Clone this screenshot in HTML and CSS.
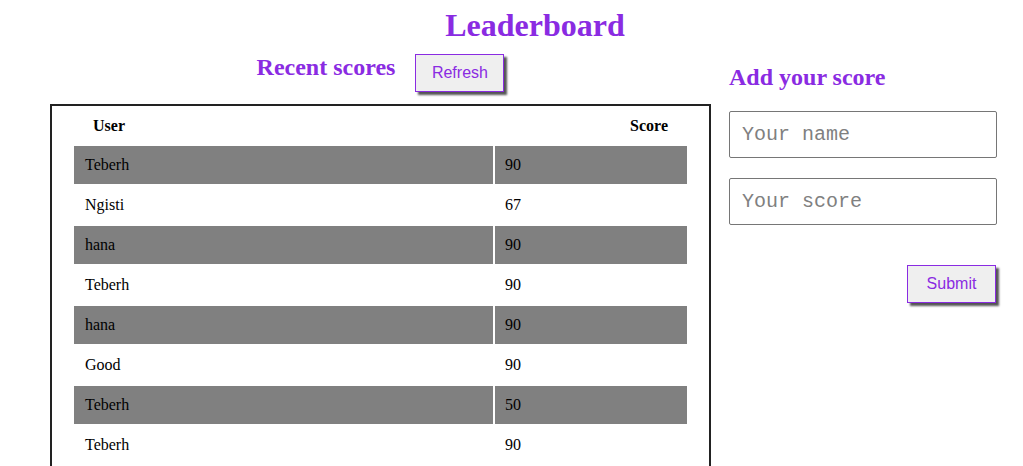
FILE: index.html
```html
<!DOCTYPE html>
<html lang="en">
<head>
<meta charset="utf-8">
<title>Leaderboard</title>
<link rel="stylesheet" href="styles.css">
</head>
<body>
<h1 class="title">Leaderboard</h1>
<main class="layout">
  <section class="recent">
    <div class="recent-head">
      <h2 class="heading">Recent scores</h2>
      <button class="btn" type="button">Refresh</button>
    </div>
    <div class="board">
      <table class="scores">
        <thead>
          <tr><th class="col-user">User</th><th class="col-score">Score</th></tr>
        </thead>
        <tbody>
          <tr class="shade"><td class="c-user">Teberh</td><td>90</td></tr>
          <tr><td class="c-user">Ngisti</td><td>67</td></tr>
          <tr class="shade"><td class="c-user">hana</td><td>90</td></tr>
          <tr><td class="c-user">Teberh</td><td>90</td></tr>
          <tr class="shade"><td class="c-user">hana</td><td>90</td></tr>
          <tr><td class="c-user">Good</td><td>90</td></tr>
          <tr class="shade"><td class="c-user">Teberh</td><td>50</td></tr>
          <tr><td class="c-user">Teberh</td><td>90</td></tr>
        </tbody>
      </table>
    </div>
  </section>
  <section class="add">
    <h2 class="heading">Add your score</h2>
    <form class="form">
      <input class="field" type="text" placeholder="Your name">
      <input class="field" type="text" placeholder="Your score">
      <div class="actions">
        <button class="btn" type="button">Submit</button>
      </div>
    </form>
  </section>
</main>
</body>
</html>
```
FILE: styles.css
```css
* { box-sizing: border-box; }

body {
  margin: 0;
  font-family: "Liberation Serif", "Times New Roman", serif;
  color: #000;
  background: #fff;
}

.title {
  margin: 8px 0 0;
  padding-left: 47px;
  text-align: center;
  font-size: 32px;
  line-height: 35px;
  font-weight: bold;
  color: #8a2be2;
}

.layout {
  display: flex;
  align-items: flex-start;
  padding: 0 26px 0 50px;
  gap: 18px;
}

.recent {
  width: 661px;
  margin-top: 11px;
}

.recent-head {
  display: flex;
  justify-content: center;
  align-items: flex-start;
  gap: 20px;
  margin-bottom: 12px;
}

.heading {
  margin: 0;
  font-size: 24px;
  line-height: 27px;
  font-weight: bold;
  color: #8a2be2;
}

.btn {
  width: 89px;
  height: 38px;
  padding: 0;
  background: #efefef;
  border: 1px solid #8a2be2;
  box-shadow: 3px 3px 2px #555;
  color: #8a2be2;
  font-family: "Liberation Sans", Arial, sans-serif;
  font-size: 16px;
  cursor: pointer;
}

.board {
  border: 2px solid #222;
  padding: 0 20px;
  height: 400px;
}

.scores {
  width: 100%;
  border-collapse: separate;
  border-spacing: 2px;
  font-size: 16px;
  line-height: 18px;
}

.scores th {
  padding: 9px 19px;
  font-weight: bold;
}

.col-user {
  width: 419px;
  text-align: left;
}

.col-score {
  text-align: right;
}

.scores td {
  padding: 10px 10px;
  text-align: left;
}

.scores td.c-user {
  padding-left: 11px;
}

.shade td {
  background: #808080;
}

.add {
  flex: 1;
  margin-top: 21px;
}

.form {
  display: flex;
  flex-direction: column;
  gap: 20px;
  margin-top: 20px;
}

.field {
  width: 268px;
  height: 47px;
  padding: 0 12px;
  border: 1px solid #767676;
  border-radius: 2px;
  font-family: "Liberation Mono", "Courier New", monospace;
  font-size: 20px;
}

.field::placeholder {
  color: #808080;
}

.actions {
  display: flex;
  justify-content: flex-end;
  width: 268px;
  padding-right: 1px;
  margin-top: 20px;
}
```
